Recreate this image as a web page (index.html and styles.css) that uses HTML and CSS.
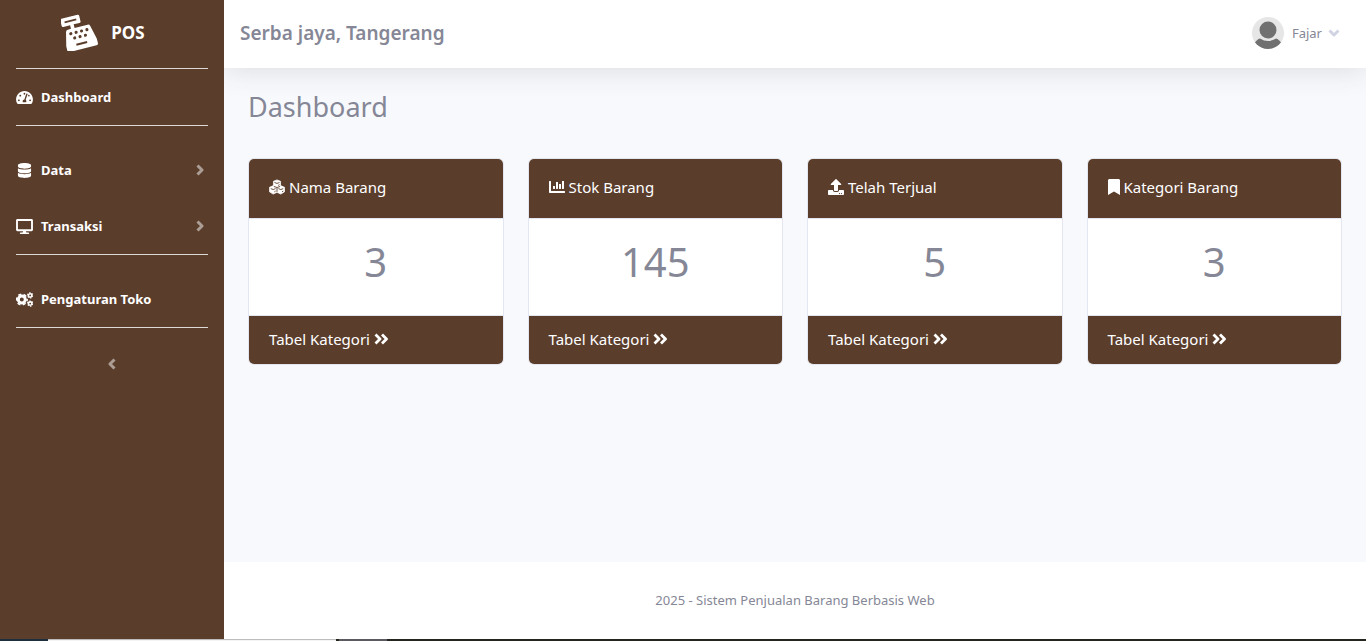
FILE: index.html
```html
<!DOCTYPE html>
<html lang="id">
<head>
<meta charset="utf-8">
<meta name="viewport" content="width=device-width, initial-scale=1">
<title>Dashboard - POS</title>
<link rel="stylesheet" href="styles.css">
</head>
<body>
<svg width="0" height="0" class="sprite" aria-hidden="true">
  <symbol id="angle" viewBox="0 0 8 12"><path d="M1.500 1.500 6 6l-4.500 4.500" fill="none" stroke="currentColor" stroke-width="3" stroke-linejoin="round"/></symbol>
  <symbol id="double" viewBox="0 0 14 12"><path d="M1.500 1.500 6 6l-4.500 4.500M8 1.500 12.500 6 8 10.500" fill="none" stroke="currentColor" stroke-width="2.800" stroke-linejoin="round"/></symbol>
</svg>
<div class="app">
  <nav class="sidebar">
    <a class="brand" href="#">
      <svg class="logo" viewBox="0 0 40 40" aria-hidden="true">
        <g transform="rotate(-14 20 22)">
          <path fill="currentColor" fill-rule="evenodd" d="M5 1h18a1.500 1.500 0 0 1 1.500 1.500v6A1.500 1.500 0 0 1 23 10h-6.500v4H31q2 0 2.500 2l3.500 15v5q0 2-2 2H5q-2 0-2-2v-5l3.500-15q.5-2 2.500-2h3.500v-4H5a1.500 1.500 0 0 1-1.500-1.500v-6A1.500 1.500 0 0 1 5 1zm2.500 3.500v2h13v-2z"/>
          <g class="keys">
            <circle cx="11" cy="19" r="1.700"/><circle cx="17" cy="19" r="1.700"/><circle cx="23" cy="19" r="1.700"/><circle cx="29" cy="19" r="1.700"/>
            <circle cx="14" cy="24.500" r="1.700"/><circle cx="20" cy="24.500" r="1.700"/><circle cx="26" cy="24.500" r="1.700"/>
            <rect x="14" y="31" width="12" height="2.200"/>
          </g>
        </g>
      </svg>
      <span>POS</span>
    </a>
    <ul class="menu">
      <li><a class="item" href="#">
        <svg class="icon" viewBox="0 0 576 512" aria-hidden="true"><path d="M288 32C128.940 32 0 160.940 0 320c0 52.800 14.250 102.260 39.060 144.800 5.610 9.620 16.300 15.200 27.440 15.200h443c11.140 0 21.830-5.580 27.440-15.200C561.750 422.260 576 372.800 576 320c0-159.060-128.940-288-288-288zm0 64c14.710 0 26.580 10.130 30.320 23.650-1.110 2.260-2.640 4.230-3.450 6.670l-9.220 27.670c-5.130 3.490-10.970 6.010-17.640 6.010-17.670 0-32-14.330-32-32S270.330 96 288 96zM96 384c-17.670 0-32-14.330-32-32s14.330-32 32-32 32 14.330 32 32-14.330 32-32 32zm48-160c-17.670 0-32-14.330-32-32s14.330-32 32-32 32 14.330 32 32-14.330 32-32 32zm246.770-72.410l-61.330 184C343.130 347.330 352 364.540 352 384c0 11.720-3.380 22.550-8.880 32H232.880c-5.500-9.450-8.880-20.280-8.880-32 0-33.940 26.500-61.430 59.900-63.590l61.340-184.010c4.170-12.560 17.730-19.450 30.360-15.170 12.570 4.190 19.350 17.790 15.170 30.360zm14.660 57.200l15.520-46.550c3.470-1.290 7.130-2.230 11.050-2.230 17.670 0 32 14.330 32 32s-14.330 32-32 32c-11.380-.010-20.890-6.280-26.570-15.220zM480 384c-17.670 0-32-14.330-32-32s14.330-32 32-32 32 14.330 32 32-14.330 32-32 32z"/></svg>
        <span>Dashboard</span></a></li>
    </ul>
    <ul class="menu spaced">
      <li><a class="item" href="#">
        <svg class="icon" viewBox="0 0 448 512" aria-hidden="true"><path d="M448 73.143v45.714C448 159.143 347.667 192 224 192S0 159.143 0 118.857V73.143C0 32.857 100.333 0 224 0s224 32.857 224 73.143zM448 176v102.857C448 319.143 347.667 352 224 352S0 319.143 0 278.857V176c48.125 33.143 136.208 48.572 224 48.572S399.874 209.143 448 176zm0 160v102.857C448 479.143 347.667 512 224 512S0 479.143 0 438.857V336c48.125 33.143 136.208 48.572 224 48.572S399.874 369.143 448 336z"/></svg>
        <span>Data</span><svg class="arrow" aria-hidden="true"><use href="#angle"/></svg></a></li>
      <li><a class="item" href="#">
        <svg class="icon" viewBox="0 0 576 512" aria-hidden="true"><path d="M528 0H48C21.500 0 0 21.500 0 48v320c0 26.500 21.500 48 48 48h192l-16 48h-72c-13.300 0-24 10.700-24 24s10.700 24 24 24h272c13.300 0 24-10.700 24-24s-10.700-24-24-24h-72l-16-48h192c26.500 0 48-21.500 48-48V48c0-26.500-21.500-48-48-48zm-16 352H64V64h448v288z"/></svg>
        <span>Transaksi</span><svg class="arrow" aria-hidden="true"><use href="#angle"/></svg></a></li>
    </ul>
    <ul class="menu spaced">
      <li><a class="item" href="#">
        <svg class="icon" viewBox="0 0 600 512" aria-hidden="true">
          <g fill="none" stroke="currentColor">
            <circle cx="205" cy="256" r="122" stroke-width="104"/><circle cx="205" cy="256" r="188" stroke-width="56" stroke-dasharray="108 88.900" stroke-dashoffset="54"/>
            <circle cx="500" cy="112" r="60" stroke-width="56"/><circle cx="500" cy="112" r="94" stroke-width="36" stroke-dasharray="54 44.400"/>
            <circle cx="500" cy="400" r="60" stroke-width="56"/><circle cx="500" cy="400" r="94" stroke-width="36" stroke-dasharray="54 44.400"/>
          </g></svg>
        <span>Pengaturan Toko</span></a></li>
    </ul>
    <button class="collapse" type="button" aria-label="Ciutkan menu"><svg class="arrow back" aria-hidden="true"><use href="#angle"/></svg></button>
  </nav>

  <div class="page">
    <header class="topbar">
      <h2 class="store">Serba jaya, Tangerang</h2>
      <button class="user" type="button">
        <svg class="avatar" viewBox="0 0 32 32" aria-hidden="true">
          <defs><clipPath id="round"><circle cx="16" cy="16" r="16"/></clipPath></defs>
          <g clip-path="url(#round)"><rect width="32" height="32" fill="#e6e6e6"/><circle cx="16" cy="13" r="8.500" fill="#707070"/><path d="M2 27q3-5 6-5.500 8 5 16 0 3 .5 6 5.500v6H2z" fill="#707070"/></g>
        </svg>
        <span>Fajar</span>
        <svg class="arrow down" aria-hidden="true"><use href="#angle"/></svg>
      </button>
    </header>

    <main class="content">
      <h1 class="title">Dashboard</h1>
      <div class="cards">
        <section class="card">
          <h2 class="card-head">
            <svg class="glyph" viewBox="0 0 18 16" aria-hidden="true"><path d="M9 0l4 1.600v4.800l4.500 2v5L13.300 16 9 14 4.700 16 .5 13.400v-5l4.500-2V1.600z" stroke="currentColor" stroke-width=".8" stroke-linejoin="round"/><path class="cut" d="M6.200 2.900 9 4l2.800-1.100M10.300 6.200l1.600-.8M2 9.800l2.700 1.100 2.700-1.100M6 13.400l1.500-.8M10.600 9.800l2.700 1.100L16 9.800M14.600 13.400l1.500-.8M5.500 7.400 9 8.600l3.500-1.200M9 9v4.500"/></svg>
            Nama Barang</h2>
          <p class="value">3</p>
          <a class="card-foot" href="#">Tabel Kategori <svg class="more" aria-hidden="true"><use href="#double"/></svg></a>
        </section>
        <section class="card">
          <h2 class="card-head">
            <svg class="glyph" viewBox="0 0 512 512" aria-hidden="true"><path d="M332.800 320h38.400c6.400 0 12.800-6.400 12.800-12.800V172.800c0-6.400-6.400-12.800-12.800-12.800h-38.400c-6.400 0-12.800 6.400-12.800 12.800v134.400c0 6.400 6.400 12.800 12.800 12.800zm96 0h38.400c6.400 0 12.800-6.400 12.800-12.800V76.800c0-6.400-6.400-12.800-12.800-12.800h-38.400c-6.400 0-12.800 6.400-12.800 12.800v230.400c0 6.400 6.400 12.800 12.800 12.800zm-288 0h38.400c6.400 0 12.800-6.400 12.800-12.800v-70.400c0-6.400-6.400-12.800-12.800-12.800h-38.400c-6.400 0-12.800 6.400-12.800 12.800v70.400c0 6.400 6.400 12.800 12.800 12.800zm96 0h38.400c6.400 0 12.800-6.400 12.800-12.800V108.800c0-6.400-6.400-12.800-12.800-12.800h-38.400c-6.400 0-12.800 6.400-12.800 12.800v198.400c0 6.400 6.400 12.800 12.800 12.800zM496 384H64V80c0-8.840-7.160-16-16-16H16C7.160 64 0 71.160 0 80v336c0 17.670 14.330 32 32 32h464c8.840 0 16-7.160 16-16v-32c0-8.840-7.160-16-16-16z"/></svg>
            Stok Barang</h2>
          <p class="value">145</p>
          <a class="card-foot" href="#">Tabel Kategori <svg class="more" aria-hidden="true"><use href="#double"/></svg></a>
        </section>
        <section class="card">
          <h2 class="card-head">
            <svg class="glyph" viewBox="0 0 512 512" aria-hidden="true"><path d="M296 384h-80c-13.300 0-24-10.700-24-24V192h-87.700c-17.800 0-26.700-21.500-14.100-34.100L242.300 5.700c7.500-7.500 19.800-7.500 27.300 0l152.200 152.200c12.600 12.600 3.700 34.100-14.100 34.100H320v168c0 13.300-10.700 24-24 24zm216-8v112c0 13.300-10.700 24-24 24H24c-13.300 0-24-10.700-24-24V376c0-13.300 10.700-24 24-24h136v8c0 30.900 25.100 56 56 56h80c30.900 0 56-25.100 56-56v-8h136c13.300 0 24 10.700 24 24zm-124 88c0-11-9-20-20-20s-20 9-20 20 9 20 20 20 20-9 20-20zm64 0c0-11-9-20-20-20s-20 9-20 20 9 20 20 20 20-9 20-20z"/></svg>
            Telah Terjual</h2>
          <p class="value">5</p>
          <a class="card-foot" href="#">Tabel Kategori <svg class="more" aria-hidden="true"><use href="#double"/></svg></a>
        </section>
        <section class="card">
          <h2 class="card-head">
            <svg class="glyph narrow" viewBox="0 0 384 512" aria-hidden="true"><path d="M0 512V48C0 21.490 21.490 0 48 0h288c26.510 0 48 21.490 48 48v464L192 400 0 512z"/></svg>
            Kategori Barang</h2>
          <p class="value">3</p>
          <a class="card-foot" href="#">Tabel Kategori <svg class="more" aria-hidden="true"><use href="#double"/></svg></a>
        </section>
      </div>
    </main>

    <footer class="footer">2025 - Sistem Penjualan Barang Berbasis Web</footer>
  </div>
</div>
<div class="taskbar" aria-hidden="true"><i class="start"></i><i class="search"></i><i class="edge"></i><i class="active"></i></div>
</body>
</html>
```
FILE: styles.css
```css
:root {
  --brown: #5a3d2b;
  --gray: #858796;
  --line: #e3e6f0;
}

* { box-sizing: border-box; }

body {
  margin: 0;
  min-height: 100vh;
  display: flex;
  flex-direction: column;
  font-family: "Noto Sans", "Open Sans", sans-serif;
  font-size: 15px;
  line-height: 24px;
  color: var(--gray);
  background: #f8f9fc;
}

h1, h2, p, ul { margin: 0; padding: 0; }
ul { list-style: none; }
a { color: inherit; text-decoration: none; }
button { font: inherit; color: inherit; background: none; border: 0; padding: 0; cursor: pointer; }
svg { flex: none; fill: currentColor; }
.sprite { position: absolute; }

.app { flex: 1; display: flex; }

.sidebar {
  position: relative;
  z-index: 1;
  width: 224px;
  flex: none;
  padding: 0 16px;
  color: #fff;
  background: var(--brown);
}

.brand {
  height: 68px;
  display: flex;
  align-items: center;
  justify-content: center;
  gap: 13px;
  padding: 0 18px 3px 0;
  font-size: 17px;
  font-weight: 700;
}
.logo { width: 37px; height: 37px; }
.keys { fill: var(--brown); }

.menu { border-top: 1px solid #dfd9d5; }
.menu.spaced { padding-top: 16px; }
.item {
  height: 56px;
  display: flex;
  align-items: center;
  gap: 8px;
  font-size: 13px;
  font-weight: 700;
}
.icon { width: 17px; height: 15px; }
.arrow { width: 8px; height: 12px; color: #ac9e95; }
.item .arrow { margin-left: auto; margin-right: 4px; }
.collapse {
  width: 100%;
  height: 73px;
  display: flex;
  align-items: center;
  justify-content: center;
  border-top: 1px solid #dfd9d5;
}
.back { transform: rotate(180deg); }

.page { flex: 1; min-width: 0; display: flex; flex-direction: column; }

.topbar {
  height: 68px;
  display: flex;
  align-items: center;
  justify-content: space-between;
  padding: 0 28px 3px 16px;
  background: #fff;
  box-shadow: 0 2px 28px rgba(58, 59, 69, 0.15);
}
.store { font-size: 19px; font-weight: 600; }
.user { display: flex; align-items: center; gap: 8px; font-size: 13px; }
.avatar { width: 32px; height: 32px; }
.down { color: #d1d3e2; transform: rotate(90deg); }

.content { flex: 1; padding: 22px 24px 24px; }
.title { font-size: 27px; line-height: 34px; font-weight: 400; margin-bottom: 34px; }

.cards { display: grid; grid-template-columns: repeat(4, 1fr); gap: 24px; }
.card {
  overflow: hidden;
  border: 1px solid var(--line);
  border-radius: 6px;
  background: #fff;
}
.card-head, .card-foot {
  display: flex;
  align-items: center;
  gap: 4px;
  padding: 0 20px 3px;
  font-size: 15px;
  font-weight: 400;
  color: #fff;
  background: var(--brown);
}
.card-head { height: 60px; border-bottom: 1px solid var(--line); }
.card-foot { height: 49px; border-top: 1px solid var(--line); }
.glyph { width: 16px; height: 16px; }
.narrow { width: 12px; }
.cut { fill: none; stroke: var(--brown); stroke-width: 1; }
.more { width: 14px; height: 12px; }
.value { padding: 19px 20px 29px; font-size: 40px; line-height: 48px; text-align: center; }

.footer {
  padding: 26px 16px 27px;
  font-size: 13px;
  text-align: center;
  background: #fff;
}

.taskbar { height: 2px; display: flex; background: #22261f; }
.start { width: 48px; background: #1d2e3d; }
.search { width: 288px; background: #f4f4f2; border-top: 1px solid #bdbdbd; }
.edge { width: 3px; }
.active { width: 48px; background: #5c5960; }
```
